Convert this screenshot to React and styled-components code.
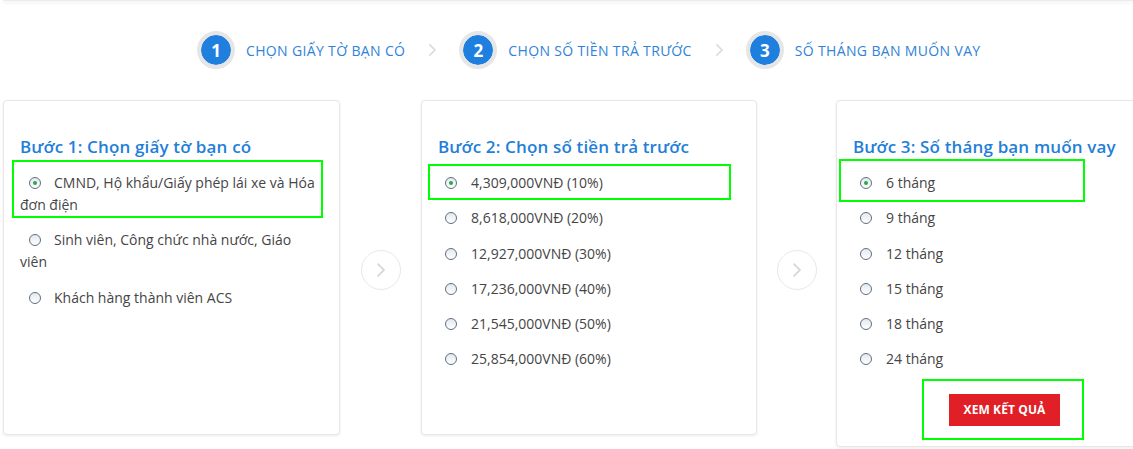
import styled, { createGlobalStyle } from "styled-components";

const GlobalStyle = createGlobalStyle`
  body {
    margin: 0;
    background: #fff;
    font-family: "Open Sans", "Liberation Sans", sans-serif;
    color: #444;
  }
  * { box-sizing: border-box; }
`;

const Page = styled.div`
  width: 1133px;
  height: 449px;
  overflow: hidden;
`;

const TopBar = styled.div`
  height: 1px;
  margin-left: 3px;
  background: #ececec;
  box-shadow: 0 1px 4px rgba(0, 0, 0, 0.18);
`;

const Steps = styled.div`
  display: flex;
  align-items: center;
  margin-top: 30px;
  padding-left: 197px;
  height: 38px;
`;

const Step = styled.div`
  display: flex;
  align-items: center;
  gap: 11px;
`;

const StepNum = styled.span`
  width: 38px;
  height: 38px;
  border-radius: 50%;
  border: 4px solid #e6e6e6;
  background: #1e7fdf;
  background-clip: padding-box;
  color: #fff;
  font-weight: 700;
  font-size: 17px;
  display: flex;
  align-items: center;
  justify-content: center;
`;

const StepLabel = styled.span`
  font-size: 14px;
  color: #2f83d9;
  text-transform: uppercase;
  letter-spacing: 0.35px;
`;

const StepSep = styled.span`
  width: 43px;
  padding-left: 12px;
  display: flex;
`;

const Cards = styled.div`
  display: flex;
  align-items: flex-start;
  margin-top: 31px;
  padding-left: 3px;
`;

const Card = styled.div`
  position: relative;
  flex: 0 0 ${({ $w }) => $w || 337}px;
  min-height: 335px;
  background: #fff;
  border: 1px solid #e8e8e8;
  border-radius: 4px;
  box-shadow: 0 1px 3px rgba(0, 0, 0, 0.08);
  padding: 34px 20px 20px 16px;
`;

const CardTitle = styled.h3`
  margin: 0 0 13px;
  font-size: 17px;
  font-weight: 600;
  line-height: 24px;
  letter-spacing: 0.15px;
  color: #1f7fd8;
`;

const OptionList = styled.ul`
  list-style: none;
  margin: 0;
  padding: 0;
`;

const Option = styled.li`
  font-size: 14px;
  line-height: 22px;
  color: #454545;
  margin-bottom: 13.3px;
`;

const Radio = styled.span`
  display: inline-block;
  position: relative;
  width: 12px;
  height: 12px;
  margin: 0 ${({ $wide }) => ($wide ? 13 : 14)}px 0 ${({ $wide }) => ($wide ? 9 : 7)}px;
  vertical-align: -1px;
  border-radius: 50%;
  border: 1px solid #5f6f82;
  background: linear-gradient(#e4e8ee, #ffffff);

  ${({ $checked }) =>
    $checked &&
    `
    &::after {
      content: "";
      position: absolute;
      left: 3px;
      top: 3px;
      width: 4px;
      height: 4px;
      border-radius: 50%;
      background: #2aa84a;
    }
  `}
`;

const Highlight = styled.div`
  position: absolute;
  border: 2px solid #00ff00;
  pointer-events: none;
  left: ${({ $x }) => $x}px;
  top: ${({ $y }) => $y}px;
  width: ${({ $w }) => $w}px;
  height: ${({ $h }) => $h}px;
`;

const ArrowCol = styled.div`
  flex: 0 0 ${({ $w }) => $w}px;
  height: 335px;
  padding-top: 5px;
  display: flex;
  align-items: center;
  justify-content: center;
`;

const ArrowCircle = styled.span`
  width: 40px;
  height: 40px;
  border-radius: 50%;
  border: 1px solid #e8e8e8;
  display: flex;
  align-items: center;
  justify-content: center;
`;

const ButtonRow = styled.div`
  display: flex;
  justify-content: center;
  padding-top: 10px;
  padding-left: 4px;
`;

const ResultButton = styled.button`
  background: #e01f26;
  color: #fff;
  border: 0;
  height: 32px;
  padding: 0 15px;
  font-family: "Open Sans", "Liberation Sans", sans-serif;
  font-weight: 700;
  font-size: 12px;
  letter-spacing: 0.1px;
  cursor: pointer;
`;

function Chevron({ color = "#dcdcdc", size = 14 }) {
  return (
    <svg width={size * 0.6} height={size} viewBox="0 0 6 10">
      <polyline
        points="1,1 5,5 1,9"
        fill="none"
        stroke={color}
        strokeWidth="1.2"
      />
    </svg>
  );
}

const steps = ["Chọn giấy tờ bạn có", "Chọn số tiền trả trước", "Số tháng bạn muốn vay"];

const docs = [
  "CMND, Hộ khẩu/Giấy phép lái xe và Hóa đơn điện",
  "Sinh viên, Công chức nhà nước, Giáo viên",
  "Khách hàng thành viên ACS",
];

const prepay = [
  "4,309,000VNĐ (10%)",
  "8,618,000VNĐ (20%)",
  "12,927,000VNĐ (30%)",
  "17,236,000VNĐ (40%)",
  "21,545,000VNĐ (50%)",
  "25,854,000VNĐ (60%)",
];

const months = [6, 9, 12, 15, 18, 24];

function Options({ items, wide }) {
  return (
    <OptionList>
      {items.map((text, i) => (
        <Option key={i}>
          <Radio $checked={i === 0} $wide={wide} />
          {text}
        </Option>
      ))}
    </OptionList>
  );
}

export default function App() {
  return (
    <Page>
      <GlobalStyle />
      <TopBar />
      <Steps>
        {steps.map((s, i) => (
          <Step key={i}>
            <StepNum>{i + 1}</StepNum>
            <StepLabel>{s}</StepLabel>
            {i < steps.length - 1 && (
              <StepSep>
                <Chevron />
              </StepSep>
            )}
          </Step>
        ))}
      </Steps>
      <Cards>
        <Card>
          <Highlight $x={8} $y={59} $w={311} $h={58} />
          <CardTitle>Bước 1: Chọn giấy tờ bạn có</CardTitle>
          <Options items={docs} wide />
        </Card>
        <ArrowCol $w={81}>
          <ArrowCircle>
            <Chevron color="#d8d8d8" size={16} />
          </ArrowCircle>
        </ArrowCol>
        <Card $w={336}>
          <Highlight $x={6} $y={63} $w={303} $h={36} />
          <CardTitle>Bước 2: Chọn số tiền trả trước</CardTitle>
          <Options items={prepay} />
        </Card>
        <ArrowCol $w={79}>
          <ArrowCircle>
            <Chevron color="#d8d8d8" size={16} />
          </ArrowCircle>
        </ArrowCol>
        <Card>
          <Highlight $x={2} $y={58} $w={246} $h={43} />
          <Highlight $x={85} $y={278} $w={162} $h={61} />
          <CardTitle>Bước 3: Số tháng bạn muốn vay</CardTitle>
          <Options items={months.map((m) => `${m} tháng`)} />
          <ButtonRow>
            <ResultButton>XEM KẾT QUẢ</ResultButton>
          </ButtonRow>
        </Card>
      </Cards>
    </Page>
  );
}
